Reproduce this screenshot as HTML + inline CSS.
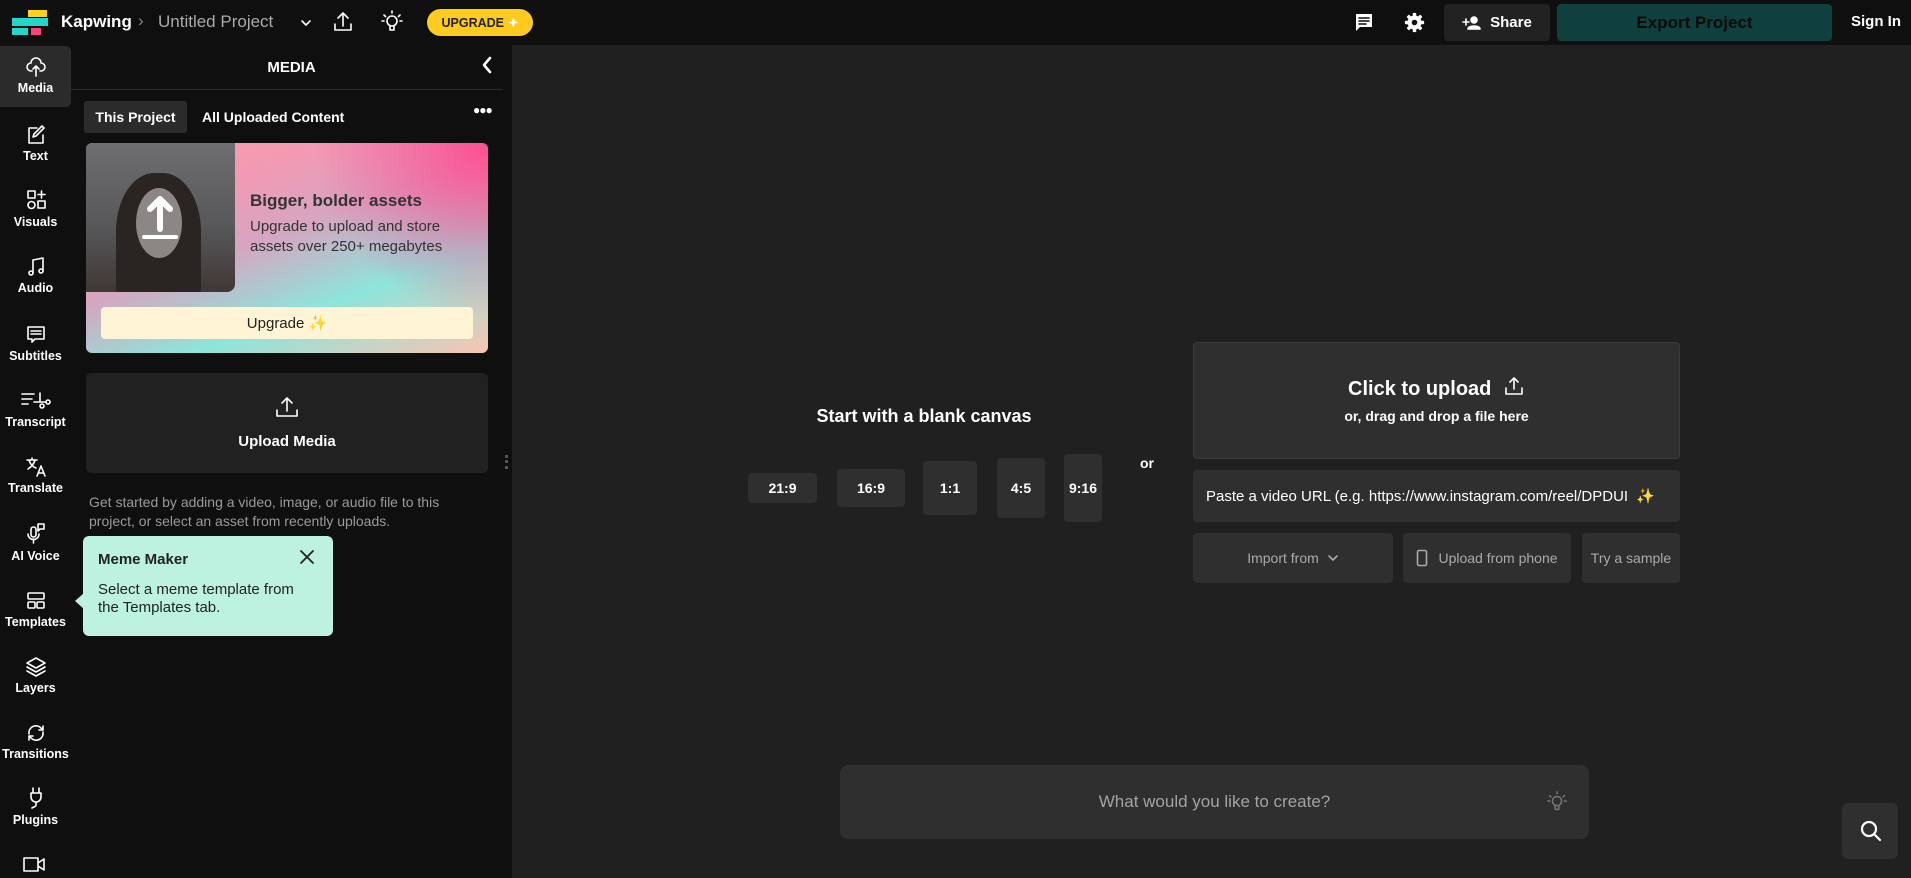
<!DOCTYPE html>
<html><head><meta charset="utf-8"><style>
*{box-sizing:border-box;margin:0;padding:0}
body{width:1911px;height:878px;overflow:hidden;background:#202020;font-family:"Liberation Sans",sans-serif;color:#fff;position:relative}
.a{position:absolute}
.top{left:0;top:0;width:1911px;height:45px;background:#0f0f0f}
.rail{left:0;top:45px;width:71px;height:833px;background:#0f0f0f}
.panel{left:71px;top:45px;width:441px;height:833px;background:#0f0f0f}
.ri{position:absolute;left:0;width:71px;text-align:center;font-size:12.5px;font-weight:bold;color:#fff}
.ri svg{display:block;margin:0 auto 3px}
.btn{position:absolute;background:#2f2f2f;border-radius:4px;display:flex;align-items:center;justify-content:center;font-weight:bold;font-size:14px;color:#fff}
svg{fill:none;stroke:#fff;stroke-width:1.6;stroke-linecap:round;stroke-linejoin:round}
</style></head><body>
<div class="a top"></div>
<div class="a" style="left:28px;top:10px;width:19px;height:7px;background:#ffd01e"></div>
<div class="a" style="left:12px;top:18px;width:36px;height:8px;background:#22d6c9"></div>
<div class="a" style="left:12px;top:28px;width:16px;height:7px;background:#22d6c9"></div>
<div class="a" style="left:31px;top:28px;width:10px;height:7px;background:#f7467a"></div>
<div class="a" style="left:61px;top:12px;font-size:17px;font-weight:bold">Kapwing</div>
<div class="a" style="left:138px;top:11px;font-size:17px;color:#888">›</div>
<div class="a" style="left:158px;top:12px;font-size:17px;color:#aaa">Untitled Project</div>
<svg class="a" style="left:299px;top:18px" width="14" height="10" viewBox="0 0 14 10"><path d="M3 3l4 4 4-4"/></svg>
<svg class="a" style="left:332px;top:10px" width="22" height="24" viewBox="0 0 22 24"><path d="M11 16V3M6 8l5-5 5 5M3 14v6h16v-6"/></svg>
<svg class="a" style="left:380px;top:9px" width="24" height="26" viewBox="0 0 24 26"><circle cx="12" cy="12" r="5"/><path d="M10 17v4h4v-4M12 2v2M4 6l1.5 1.5M20 6l-1.5 1.5M2 12h2M20 12h2"/></svg>
<div class="a" style="left:427px;top:9px;width:106px;height:27px;background:#ffcb1f;border-radius:14px;color:#222;font-size:12.5px;font-weight:bold;display:flex;align-items:center;justify-content:center">UPGRADE <span style="color:#fff;margin-left:4px">✦</span></div>
<svg class="a" style="left:1354px;top:12px" width="20" height="21" viewBox="0 0 20 21"><path d="M2 2h16v13H6l-4 4z" fill="#fff" stroke="none"/><path d="M5 6h10M5 9h10M5 12h7" stroke="#0f0f0f"/></svg>
<svg class="a" style="left:1404px;top:12px" width="21" height="21" viewBox="0 0 24 24"><g fill="#fff" stroke="none"><rect x="10" y="1" width="4" height="22" rx="1"/><rect x="10" y="1" width="4" height="22" rx="1" transform="rotate(45 12 12)"/><rect x="10" y="1" width="4" height="22" rx="1" transform="rotate(90 12 12)"/><rect x="10" y="1" width="4" height="22" rx="1" transform="rotate(135 12 12)"/><circle cx="12" cy="12" r="8"/></g><circle cx="12" cy="12" r="3.2" fill="#0f0f0f" stroke="none"/></svg>
<div class="a" style="left:1444px;top:4px;width:106px;height:37px;background:#222;border-radius:4px;font-size:15px;font-weight:bold;display:flex;align-items:center;justify-content:center">
<svg width="20" height="14" viewBox="0 0 20 14" style="margin-right:8px"><circle cx="12" cy="4" r="3" fill="#fff"/><path d="M6 13c0-4 12-4 12 0z" fill="#fff"/><path d="M1 6h6M4 3v6"/></svg>Share</div>
<div class="a" style="left:1557px;top:4px;width:275px;height:37px;background:#10403d;border-radius:4px;font-size:17px;font-weight:bold;color:#0a0a0a;display:flex;align-items:center;justify-content:center">Export Project</div>
<div class="a" style="left:1851px;top:13px;font-size:15px;font-weight:bold">Sign In</div>

<div class="a rail"></div>
<div class="a" style="left:0;top:46px;width:71px;height:61px;background:#2b2b2b;border-radius:0 5px 5px 0"></div>
<div class="ri" style="top:56px"><svg width="20" height="22" viewBox="0 0 20 22"><path d="M6 15H5a4 4 0 0 1 0-8 5 5 0 0 1 10 0 4 4 0 0 1 0 8h-1M10 20V10M7 13l3-3 3 3"/></svg>Media</div>
<div class="ri" style="top:124px"><svg width="20" height="22" viewBox="0 0 20 22"><path d="M11 4H3v15h14v-8M16 2l2 2-8 8-3 1 1-3z"/></svg>Text</div>
<div class="ri" style="top:188px"><svg width="22" height="24" viewBox="0 0 22 24"><rect x="3" y="3" width="7" height="7"/><circle cx="6.5" cy="17" r="3.5"/><rect x="13" y="13" width="7" height="7"/><path d="M16.5 3v7M13 6.5h7"/></svg>Visuals</div>
<div class="ri" style="top:256px"><svg width="20" height="22" viewBox="0 0 20 22"><path d="M7 17V4l10-2v13"/><circle cx="5" cy="17" r="2"/><circle cx="15" cy="15" r="2"/></svg>Audio</div>
<div class="ri" style="top:324px"><svg width="20" height="22" viewBox="0 0 20 22"><path d="M2 3h16v12H9l-3 3v-3H2z"/><path d="M5 7h10M5 10h10"/></svg>Subtitles</div>
<div class="ri" style="top:390px"><svg width="32" height="22" viewBox="0 0 32 22"><path d="M2 4h12M2 9h10M2 14h6M20 3v9M14 12h12"/><circle cx="22" cy="16" r="2"/><circle cx="28" cy="12" r="2"/></svg>Transcript</div>
<div class="ri" style="top:456px"><svg width="22" height="22" viewBox="0 0 22 22"><path d="M2 4h10M7 2v2M4 4c1 4 4 7 7 8M10 4c-1 4-4 7-7 9M12 20l4-10 4 10M13.5 17h5"/></svg>Translate</div>
<div class="ri" style="top:522px"><svg width="22" height="24" viewBox="0 0 22 24"><rect x="6" y="5" width="5" height="10" rx="2.5"/><path d="M3 12a5.5 5.5 0 0 0 11 0M8.5 17v4M13 2h6v5h-4l-2 2z"/></svg>AI Voice</div>
<div class="ri" style="top:590px"><svg width="20" height="22" viewBox="0 0 20 22"><rect x="2" y="3" width="16" height="6" rx="1"/><rect x="2" y="12" width="7" height="6" rx="1"/><rect x="11" y="12" width="7" height="6" rx="1"/></svg>Templates</div>
<div class="ri" style="top:656px"><svg width="22" height="22" viewBox="0 0 22 22"><path d="M11 2l9 5-9 5-9-5zM2 11l9 5 9-5M2 15l9 5 9-5"/></svg>Layers</div>
<div class="ri" style="top:722px"><svg width="22" height="22" viewBox="0 0 22 22"><path d="M4 12a7 7 0 0 1 12-6l2 2M18 4v4h-4M18 10a7 7 0 0 1-12 6l-2-2M4 18v-4h4"/></svg>Transitions</div>
<div class="ri" style="top:786px"><svg width="20" height="24" viewBox="0 0 20 24"><path d="M7 2v5M13 2v5M5 7h10v4a5 5 0 0 1-10 0zM10 16v3c0 2-3 2-4 3"/></svg>Plugins</div>
<svg class="a" style="left:22px;top:855px" width="24" height="20" viewBox="0 0 24 20"><path d="M2 3h14v13H2zM16 8l6-4v11l-6-4"/></svg>

<div class="a panel"></div>
<div class="a" style="left:71px;top:59px;width:441px;text-align:center;font-weight:bold;font-size:15px">MEDIA</div>
<svg class="a" style="left:480px;top:55px" width="14" height="20" viewBox="0 0 14 20"><path d="M10 3L4 10l6 7" stroke-width="2.6"/></svg>
<div class="a" style="left:71px;top:89px;width:432px;height:1px;background:#2a2a2a"></div>
<div class="a" style="left:84px;top:101px;width:103px;height:32px;background:#2b2b2b;border-radius:3px;font-size:14px;font-weight:bold;display:flex;align-items:center;justify-content:center">This Project</div>
<div class="a" style="left:202px;top:109px;font-size:14px;font-weight:bold">All Uploaded Content</div>
<div class="a" style="left:473px;top:103px;font-size:12px;font-weight:bold;letter-spacing:-1px">●●●</div>
<div class="a" style="left:86px;top:143px;width:402px;height:210px;border-radius:6px;background:linear-gradient(160deg,#f7a0a8 0%,#f39ab4 25%,#d6a5c0 45%,#8de5db 70%,#f9c4b2 100%);overflow:hidden">
 <div class="a" style="right:0;top:0;width:200px;height:210px;background:radial-gradient(circle at 100% 0,#ff4f93 0,rgba(255,79,147,0) 60%)"></div>
 <div class="a" style="left:0;top:0;width:149px;height:149px;background:linear-gradient(180deg,#6e6e71,#58585a 55%,#3f3835);border-radius:0 0 8px 0;overflow:hidden">
  <div class="a" style="left:30px;top:30px;width:85px;height:130px;border-radius:45% 45% 10% 10%;background:#2a2422"></div>
  <div class="a" style="left:50px;top:45px;width:46px;height:70px;border-radius:50%;background:#8c8784"></div>
 </div>
 <svg class="a" style="left:52px;top:48px" width="44" height="50" viewBox="0 0 44 50"><path d="M22 38V8M12 18L22 8l10 10" stroke-width="6"/><path d="M6 46h32" stroke-width="4"/></svg>
 <div class="a" style="left:164px;top:48px;font-size:17px;font-weight:bold;color:#333">Bigger, bolder assets</div>
 <div class="a" style="left:164px;top:74px;font-size:15px;line-height:20px;color:#333">Upgrade to upload and store<br>assets over 250+ megabytes</div>
 <div class="a" style="left:15px;top:164px;width:372px;height:32px;background:#fff5d6;border-radius:4px;color:#222;font-size:15px;display:flex;align-items:center;justify-content:center">Upgrade ✨</div>
</div>
<div class="a" style="left:86px;top:373px;width:402px;height:100px;background:#212121;border-radius:5px"></div>
<svg class="a" style="left:275px;top:395px" width="24" height="24" viewBox="0 0 24 24"><path d="M12 16V3M7 8l5-5 5 5M2 15v6h20v-6"/></svg>
<div class="a" style="left:86px;top:433px;width:402px;text-align:center;font-size:15px;font-weight:bold">Upload Media</div>
<div class="a" style="left:505px;top:455px;width:3px;height:14px;border-left:3px dotted #555"></div>
<div class="a" style="left:89px;top:493px;font-size:14px;line-height:19px;color:#9a9a9a">Get started by adding a video, image, or audio file to this<br>project, or select an asset from recently uploads.</div>
<div class="a" style="left:83px;top:536px;width:250px;height:100px;background:#bdf2e0;border-radius:6px;color:#222"></div>
<div class="a" style="left:75px;top:593px;width:0;height:0;border-top:8px solid transparent;border-bottom:8px solid transparent;border-right:9px solid #bdf2e0"></div>
<div class="a" style="left:98px;top:551px;font-size:15px;font-weight:bold;color:#222">Meme Maker</div>
<svg class="a" style="left:299px;top:549px" width="16" height="16" viewBox="0 0 16 16"><path d="M2 2l12 12M14 2L2 14" stroke="#222" stroke-width="1.8"/></svg>
<div class="a" style="left:98px;top:581px;font-size:15px;line-height:18px;color:#222">Select a meme template from<br>the Templates tab.</div>

<div class="a" style="left:744px;top:406px;width:360px;text-align:center;font-size:18px;font-weight:bold">Start with a blank canvas</div>
<div class="btn" style="left:748px;top:473px;width:69px;height:30px">21:9</div>
<div class="btn" style="left:837px;top:469px;width:68px;height:38px">16:9</div>
<div class="btn" style="left:923px;top:461px;width:54px;height:54px">1:1</div>
<div class="btn" style="left:997px;top:458px;width:48px;height:60px">4:5</div>
<div class="btn" style="left:1064px;top:454px;width:38px;height:68px">9:16</div>
<div class="a" style="left:1140px;top:455px;font-size:14px;font-weight:bold">or</div>
<div class="a" style="left:1193px;top:342px;width:487px;height:117px;background:#2f2f2f;border:1px solid #3b3b3b;border-radius:4px"></div>
<div class="a" style="left:1193px;top:375px;width:487px;text-align:center;font-size:20px;font-weight:bold">Click to upload <svg width="22" height="22" viewBox="0 0 22 22" style="vertical-align:-2px;margin-left:6px"><path d="M11 14V3M7 7l4-4 4 4M3 13v6h16v-6"/></svg></div>
<div class="a" style="left:1193px;top:408px;width:487px;text-align:center;font-size:14px;font-weight:bold">or, drag and drop a file here</div>
<div class="a" style="left:1193px;top:470px;width:487px;height:52px;background:#2f2f2f;border-radius:4px;font-size:15px;padding:17px 0 0 13px;white-space:nowrap;overflow:hidden">Paste a video URL (e.g. https://www.instagram.com/reel/DPDUI <span style="margin-left:4px">✨</span></div>
<div class="btn" style="left:1193px;top:533px;width:200px;height:50px;font-weight:normal;color:#aaa">Import from <svg width="12" height="8" viewBox="0 0 12 8" style="margin-left:8px;stroke:#aaa"><path d="M2 2l4 4 4-4"/></svg></div>
<div class="btn" style="left:1403px;top:533px;width:168px;height:50px;font-weight:normal;color:#aaa"><svg width="12" height="18" viewBox="0 0 12 18" style="margin-right:10px;stroke:#aaa"><rect x="1.5" y="1.5" width="9" height="15" rx="1.5"/></svg>Upload from phone</div>
<div class="btn" style="left:1582px;top:533px;width:98px;height:50px;font-weight:normal;color:#aaa">Try a sample</div>
<div class="a" style="left:840px;top:765px;width:749px;height:74px;background:#2f2f2f;border-radius:8px"></div>
<div class="a" style="left:840px;top:792px;width:749px;text-align:center;font-size:17px;color:#a0a4a8">What would you like to create?</div>
<svg class="a" style="left:1546px;top:790px" width="22" height="24" viewBox="0 0 24 26"><g stroke="#777"><circle cx="12" cy="12" r="5"/><path d="M10 17v4h4v-4M12 2v2M4 6l1.5 1.5M20 6l-1.5 1.5M2 12h2M20 12h2"/></g></svg>
<div class="a" style="left:1842px;top:803px;width:56px;height:56px;background:#2f2f2f;border-radius:6px"></div>
<svg class="a" style="left:1858px;top:818px" width="26" height="26" viewBox="0 0 26 26"><circle cx="11" cy="11" r="7" stroke-width="2.2"/><path d="M16 16l6 6" stroke-width="2.2"/></svg>
</body></html>
